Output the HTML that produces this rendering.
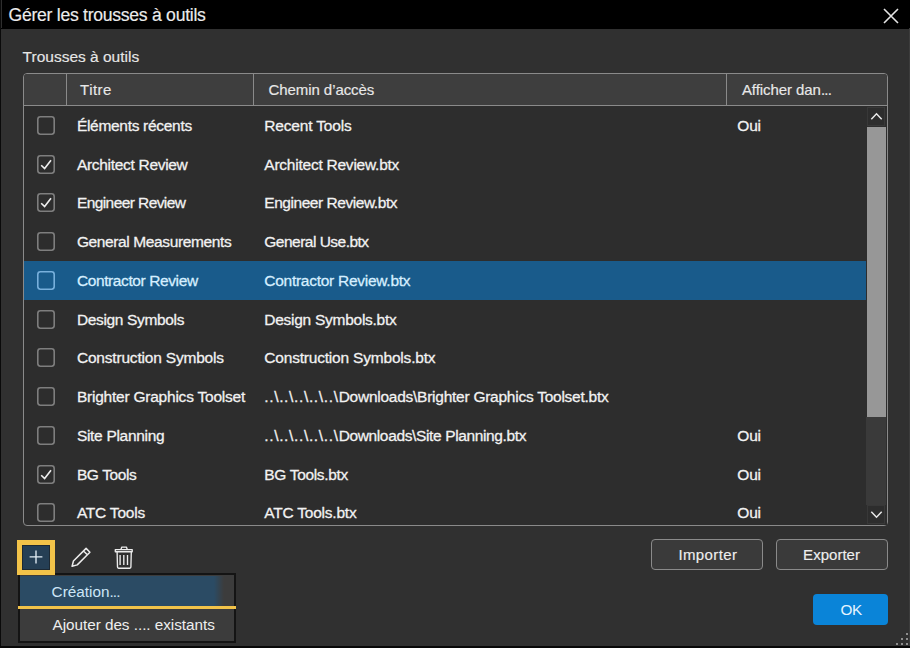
<!DOCTYPE html>
<html><head><meta charset="utf-8"><style>
html,body{margin:0;padding:0;}
body{width:910px;height:648px;position:relative;overflow:hidden;background:#303030;font-family:"Liberation Sans",sans-serif;}
.t{position:absolute;white-space:pre;line-height:1;}
.r{-webkit-text-stroke:0.28px currentColor;}
.dd{letter-spacing:0.45px;}
.h{-webkit-text-stroke:0.15px currentColor;}
.abs{position:absolute;}
.hlrow{position:absolute;left:24px;width:842px;background:#195b8b;}
.cb{position:absolute;left:36.8px;width:15.2px;height:16px;border:1.8px solid #7e7e7e;border-radius:3px;}
.ck{position:absolute;}
</style></head><body>
<div class="abs" style="left:0;top:0;width:910px;height:28.5px;background:#000000"></div>
<div class="abs" style="left:0;top:0;width:1px;height:648px;background:#0a0a0a"></div>
<div class="abs" style="left:1px;top:0;width:1px;height:28px;background:#2e2e2e"></div>
<div class="abs" style="left:909px;top:28px;width:1px;height:620px;background:#3c3c3c"></div>
<div id="x_title" class="t h" style="left:8.500000000000007px;top:7.10px;font-size:17.6px;color:#ececec;font-weight:normal;letter-spacing:-0.270px">Gérer les trousses à outils</div>

<svg class="abs" style="left:883px;top:8px" width="16" height="16" viewBox="0 0 16 16"><path d="M1 1 L15 15 M15 1 L1 15" stroke="#e4e4e4" stroke-width="1.6"/></svg>
<div id="x_label" class="t h" style="left:22.600000000000005px;top:48.68px;font-size:15.5px;color:#e6e6e6;font-weight:normal;letter-spacing:0.000px">Trousses à outils</div>

<div class="abs" style="left:23px;top:73px;width:863px;height:451px;border:1px solid #8a8a8a;border-radius:4px;background:#2d2d2d;overflow:hidden">
  <div class="abs" style="left:0;top:0;width:863px;height:31px;background:#3e3e3e;border-bottom:1px solid #8a8a8a"></div>
  <div class="abs" style="left:42px;top:0;width:1px;height:31px;background:#8a8a8a"></div>
  <div class="abs" style="left:229px;top:0;width:1px;height:31px;background:#8a8a8a"></div>
  <div class="abs" style="left:702px;top:0;width:1px;height:31px;background:#8a8a8a"></div>
</div>
<div id="x_h1" class="t h" style="left:80.09999999999995px;top:82.30px;font-size:15px;color:#e8e8e8;font-weight:normal;letter-spacing:0.450px">Titre</div>

<div id="x_h2" class="t h" style="left:268.5px;top:82.30px;font-size:15px;color:#e8e8e8;font-weight:normal;letter-spacing:-0.069px">Chemin d’accès</div>

<div id="x_h3" class="t h" style="left:741.8999999999997px;top:82.30px;font-size:15px;color:#e8e8e8;font-weight:normal;letter-spacing:-0.064px">Afficher dan<span style="letter-spacing:-0.8px">...</span></div>

<div class="abs" style="left:24px;top:106px;width:863px;height:419px;overflow:hidden">
<div class="abs" style="left:-24px;top:-106px;width:910px;height:648px">
<svg class="ck" style="left:37px;top:115.88px" width="18" height="19" viewBox="0 0 18 19"><rect x="0.8" y="0.8" width="16.4" height="17.4" rx="2.6" fill="none" stroke="#7e7e7e" stroke-width="1.6"/></svg>
<div class="t r" style="left:76.9px;top:117.95px;font-size:15.5px;color:#f2f2f2;font-weight:normal;letter-spacing:-0.300px">Éléments récents</div>
<div class="t r" style="left:264.3px;top:117.95px;font-size:15.5px;color:#f2f2f2;font-weight:normal;"><span style="letter-spacing:-0.164px">Recent Tools</span></div>
<div class="t r" style="left:737.3px;top:117.95px;font-size:15.5px;color:#f2f2f2;font-weight:normal;letter-spacing:-0.2px">Oui</div>
<svg class="ck" style="left:37px;top:154.62px" width="18" height="19" viewBox="0 0 18 19"><rect x="0.8" y="0.8" width="16.4" height="17.4" rx="2.6" fill="none" stroke="#7e7e7e" stroke-width="1.6"/></svg>
<svg class="ck" style="left:37px;top:154.62px" width="18" height="19" viewBox="0 0 18 19"><path d="M4.2 10.2 L7.6 13.6 L14 5.2" fill="none" stroke="#eeeeee" stroke-width="1.6"/></svg>
<div class="t r" style="left:76.9px;top:156.70px;font-size:15.5px;color:#f2f2f2;font-weight:normal;letter-spacing:-0.300px">Architect Review</div>
<div class="t r" style="left:264.3px;top:156.70px;font-size:15.5px;color:#f2f2f2;font-weight:normal;"><span style="letter-spacing:-0.237px">Architect Review.btx</span></div>
<svg class="ck" style="left:37px;top:193.38px" width="18" height="19" viewBox="0 0 18 19"><rect x="0.8" y="0.8" width="16.4" height="17.4" rx="2.6" fill="none" stroke="#7e7e7e" stroke-width="1.6"/></svg>
<svg class="ck" style="left:37px;top:193.38px" width="18" height="19" viewBox="0 0 18 19"><path d="M4.2 10.2 L7.6 13.6 L14 5.2" fill="none" stroke="#eeeeee" stroke-width="1.6"/></svg>
<div class="t r" style="left:76.9px;top:195.45px;font-size:15.5px;color:#f2f2f2;font-weight:normal;letter-spacing:-0.579px">Engineer Review</div>
<div class="t r" style="left:264.3px;top:195.45px;font-size:15.5px;color:#f2f2f2;font-weight:normal;"><span style="letter-spacing:-0.450px">Engineer Review.btx</span></div>
<svg class="ck" style="left:37px;top:232.12px" width="18" height="19" viewBox="0 0 18 19"><rect x="0.8" y="0.8" width="16.4" height="17.4" rx="2.6" fill="none" stroke="#7e7e7e" stroke-width="1.6"/></svg>
<div class="t r" style="left:76.9px;top:234.20px;font-size:15.5px;color:#f2f2f2;font-weight:normal;letter-spacing:-0.379px">General Measurements</div>
<div class="t r" style="left:264.3px;top:234.20px;font-size:15.5px;color:#f2f2f2;font-weight:normal;"><span style="letter-spacing:-0.514px">General Use.btx</span></div>
<div class="hlrow" style="top:261px;height:39px"></div>
<svg class="ck" style="left:37px;top:270.88px" width="18" height="19" viewBox="0 0 18 19"><rect x="0.8" y="0.8" width="16.4" height="17.4" rx="2.6" fill="none" stroke="#78b0dc" stroke-width="1.6"/></svg>
<div class="t r" style="left:76.9px;top:272.95px;font-size:15.5px;color:#d6efff;font-weight:normal;letter-spacing:-0.394px">Contractor Review</div>
<div class="t r" style="left:264.3px;top:272.95px;font-size:15.5px;color:#d6efff;font-weight:normal;"><span style="letter-spacing:-0.270px">Contractor Review.btx</span></div>
<svg class="ck" style="left:37px;top:309.62px" width="18" height="19" viewBox="0 0 18 19"><rect x="0.8" y="0.8" width="16.4" height="17.4" rx="2.6" fill="none" stroke="#7e7e7e" stroke-width="1.6"/></svg>
<div class="t r" style="left:76.9px;top:311.70px;font-size:15.5px;color:#f2f2f2;font-weight:normal;letter-spacing:-0.346px">Design Symbols</div>
<div class="t r" style="left:264.3px;top:311.70px;font-size:15.5px;color:#f2f2f2;font-weight:normal;"><span style="letter-spacing:-0.265px">Design Symbols.btx</span></div>
<svg class="ck" style="left:37px;top:348.38px" width="18" height="19" viewBox="0 0 18 19"><rect x="0.8" y="0.8" width="16.4" height="17.4" rx="2.6" fill="none" stroke="#7e7e7e" stroke-width="1.6"/></svg>
<div class="t r" style="left:76.9px;top:350.45px;font-size:15.5px;color:#f2f2f2;font-weight:normal;letter-spacing:-0.189px">Construction Symbols</div>
<div class="t r" style="left:264.3px;top:350.45px;font-size:15.5px;color:#f2f2f2;font-weight:normal;"><span style="letter-spacing:-0.196px">Construction Symbols.btx</span></div>
<svg class="ck" style="left:37px;top:387.12px" width="18" height="19" viewBox="0 0 18 19"><rect x="0.8" y="0.8" width="16.4" height="17.4" rx="2.6" fill="none" stroke="#7e7e7e" stroke-width="1.6"/></svg>
<div class="t r" style="left:76.9px;top:389.20px;font-size:15.5px;color:#f2f2f2;font-weight:normal;letter-spacing:-0.225px">Brighter Graphics Toolset</div>
<div class="t r" style="left:264.3px;top:389.20px;font-size:15.5px;color:#f2f2f2;font-weight:normal;"><span style="letter-spacing:0.648px">..\..\..\..\..\</span><span style="letter-spacing:-0.252px">Downloads\Brighter Graphics Toolset.btx</span></div>
<svg class="ck" style="left:37px;top:425.88px" width="18" height="19" viewBox="0 0 18 19"><rect x="0.8" y="0.8" width="16.4" height="17.4" rx="2.6" fill="none" stroke="#7e7e7e" stroke-width="1.6"/></svg>
<div class="t r" style="left:76.9px;top:427.95px;font-size:15.5px;color:#f2f2f2;font-weight:normal;letter-spacing:-0.300px">Site Planning</div>
<div class="t r" style="left:264.3px;top:427.95px;font-size:15.5px;color:#f2f2f2;font-weight:normal;"><span style="letter-spacing:0.648px">..\..\..\..\..\</span><span style="letter-spacing:-0.365px">Downloads\Site Planning.btx</span></div>
<div class="t r" style="left:737.3px;top:427.95px;font-size:15.5px;color:#f2f2f2;font-weight:normal;letter-spacing:-0.2px">Oui</div>
<svg class="ck" style="left:37px;top:464.62px" width="18" height="19" viewBox="0 0 18 19"><rect x="0.8" y="0.8" width="16.4" height="17.4" rx="2.6" fill="none" stroke="#7e7e7e" stroke-width="1.6"/></svg>
<svg class="ck" style="left:37px;top:464.62px" width="18" height="19" viewBox="0 0 18 19"><path d="M4.2 10.2 L7.6 13.6 L14 5.2" fill="none" stroke="#eeeeee" stroke-width="1.6"/></svg>
<div class="t r" style="left:76.9px;top:466.70px;font-size:15.5px;color:#f2f2f2;font-weight:normal;letter-spacing:-0.386px">BG Tools</div>
<div class="t r" style="left:264.3px;top:466.70px;font-size:15.5px;color:#f2f2f2;font-weight:normal;"><span style="letter-spacing:-0.327px">BG Tools.btx</span></div>
<div class="t r" style="left:737.3px;top:466.70px;font-size:15.5px;color:#f2f2f2;font-weight:normal;letter-spacing:-0.2px">Oui</div>
<svg class="ck" style="left:37px;top:503.38px" width="18" height="19" viewBox="0 0 18 19"><rect x="0.8" y="0.8" width="16.4" height="17.4" rx="2.6" fill="none" stroke="#7e7e7e" stroke-width="1.6"/></svg>
<div class="t r" style="left:76.9px;top:505.45px;font-size:15.5px;color:#f2f2f2;font-weight:normal;letter-spacing:-0.225px">ATC Tools</div>
<div class="t r" style="left:264.3px;top:505.45px;font-size:15.5px;color:#f2f2f2;font-weight:normal;"><span style="letter-spacing:-0.225px">ATC Tools.btx</span></div>
<div class="t r" style="left:737.3px;top:505.45px;font-size:15.5px;color:#f2f2f2;font-weight:normal;letter-spacing:-0.2px">Oui</div>

</div></div>
<div class="abs" style="left:866px;top:106px;width:21px;height:419px;background:#2d2d2d"></div>
<div class="abs" style="left:866px;top:417px;width:20px;height:88px;background:#3a3a3a"></div>
<div class="abs" style="left:867px;top:127px;width:19px;height:290px;background:#979797"></div>
<div class="abs" style="left:867px;top:107px;width:18px;height:19px;box-shadow:inset 0 0 0 1px #383838"></div>
<div class="abs" style="left:867px;top:505px;width:18px;height:19px;box-shadow:inset 0 0 0 1px #383838"></div>
<svg class="abs" style="left:866px;top:106px" width="21" height="21" viewBox="0 0 21 21"><path d="M5.3 13.2 L10.5 7.8 L15.7 13.2" fill="none" stroke="#e8e8e8" stroke-width="1.5"/></svg>
<svg class="abs" style="left:866px;top:504px" width="21" height="21" viewBox="0 0 21 21"><path d="M5.3 7.8 L10.5 13.2 L15.7 7.8" fill="none" stroke="#e8e8e8" stroke-width="1.5"/></svg>

<div class="abs" style="left:651px;top:539px;width:110px;height:29px;border:1px solid #8a8a8a;border-radius:4px;background:#3a3a3a"></div>
<div class="abs" style="left:776px;top:539px;width:110px;height:29px;border:1px solid #8a8a8a;border-radius:4px;background:#3a3a3a"></div>
<div id="x_imp" class="t h" style="left:678.3999999999997px;top:547.30px;font-size:15px;color:#eeeeee;font-weight:normal;letter-spacing:0.386px">Importer</div>

<div id="x_exp" class="t h" style="left:803.0999999999996px;top:547.30px;font-size:15px;color:#eeeeee;font-weight:normal;letter-spacing:0.029px">Exporter</div>

<div class="abs" style="left:813px;top:594px;width:75px;height:31px;border-radius:4px;background:#0a84d8"></div>
<div id="x_ok" class="t " style="left:840.6000000000004px;top:602.35px;font-size:15.3px;color:#e6f5ff;font-weight:normal;letter-spacing:-0.600px">OK</div>


<svg class="abs" style="left:60px;top:540px" width="40" height="35" viewBox="60 540 40 35"><path d="M73.44 561.04 L86.09 548.39 L89.91 552.21 L77.26 564.86 L72.10 566.20 Z M83.55 550.94 L87.36 554.75" fill="none" stroke="#ececec" stroke-width="1.5" stroke-linejoin="round"/></svg>
<svg class="abs" style="left:105px;top:540px" width="35" height="35" viewBox="105 540 35 35"><path d="M121 549.3 L121.8 547.1 H126.4 L127.2 549.3 M115.3 549.6 H132.2 V551.7 H115.3 Z M117.1 551.7 L117.5 567.1 Q117.5 568.2 118.6 568.2 H129.8 Q130.9 568.2 130.9 567.1 L131.3 551.7 M120.1 555 V565 M123.8 555 V565 M127.5 555 V565" fill="none" stroke="#ececec" stroke-width="1.35" stroke-linejoin="round"/></svg>

<div class="abs" style="left:18px;top:573px;width:218px;height:70px;box-sizing:border-box;border:2px solid #141414;background:#3c3c3c"></div>
<div class="abs" style="left:20px;top:575.5px;width:214px;height:30.5px;background:linear-gradient(to right,#2b4b64 0px,#2b4b64 194px,#3c3c3c 204px)"></div>
<div class="abs" style="left:18px;top:606px;width:218px;height:3px;background:#f2c349"></div>
<div id="x_cre" class="t " style="left:51.59999999999999px;top:584.05px;font-size:15.3px;color:#cde6f7;font-weight:normal;letter-spacing:0.000px">Création<span style="letter-spacing:-0.8px">...</span></div>

<div id="x_aj" class="t " style="left:52.50000000000003px;top:616.75px;font-size:15.3px;color:#eeeeee;font-weight:normal;letter-spacing:-0.036px">Ajouter des .... existants</div>

<div class="abs" style="left:17px;top:540px;width:28px;height:25px;border:5px solid #f2c349;background:#253f55;box-shadow:inset 0 0 0 1px #1d2933"></div>
<svg class="abs" style="left:20px;top:540px" width="35" height="35" viewBox="20 540 35 35"><path d="M36 550.4 V563.4 M29.6 556.9 H42.4" stroke="#e2eef6" stroke-width="1.35"/></svg>
<div class="abs" style="left:0;top:646px;width:910px;height:2px;background:#080808"></div>
<div class="abs" style="left:906px;top:633px;width:2px;height:2px;background:#8e8e8e"></div><div class="abs" style="left:901px;top:638px;width:2px;height:2px;background:#8e8e8e"></div><div class="abs" style="left:906px;top:638px;width:2px;height:2px;background:#8e8e8e"></div><div class="abs" style="left:896px;top:643px;width:2px;height:2px;background:#8e8e8e"></div><div class="abs" style="left:901px;top:643px;width:2px;height:2px;background:#8e8e8e"></div><div class="abs" style="left:906px;top:643px;width:2px;height:2px;background:#8e8e8e"></div>
</body></html>
